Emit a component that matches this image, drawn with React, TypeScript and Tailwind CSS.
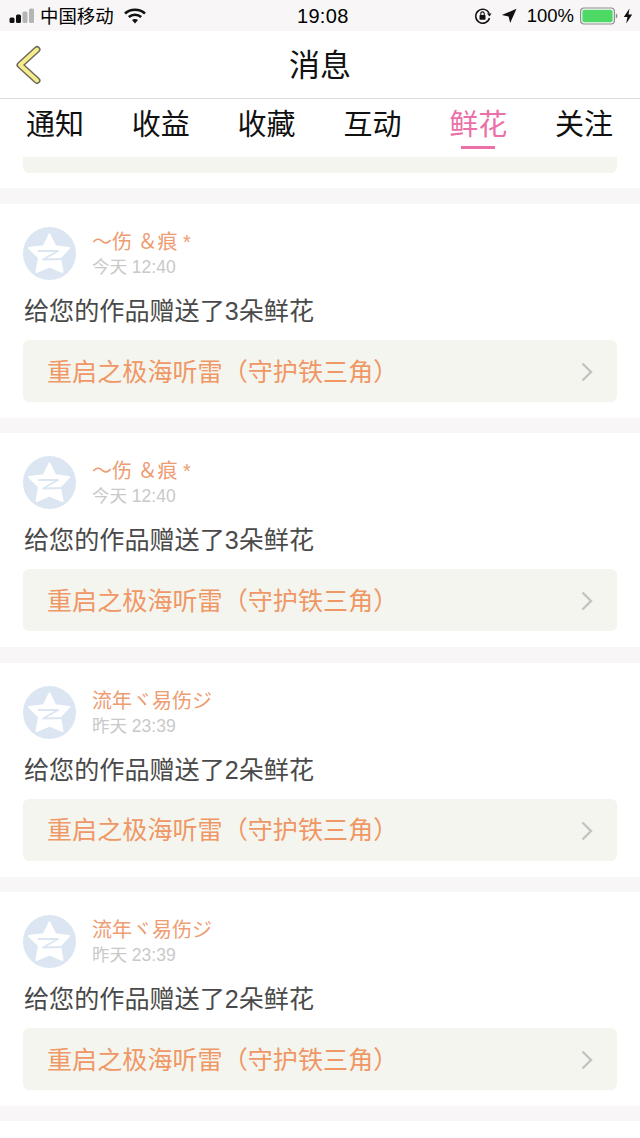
const FONT = "font-['Liberation_Sans','Noto_Sans_CJK_SC',sans-serif]";

function QAvatar() {
  return (
    <svg width="53" height="53" viewBox="0 0 53 53" className="shrink-0">
      <circle cx="26.5" cy="26.5" r="26.5" fill="#dbe6f2" />
      <path d="M26.5 7.5 L32.2 19.2 L46 21 L37 30.8 L39.5 45 L26.5 39.6 L13.5 45 L16 30.8 L6 21 L20.8 19.2 Z" fill="#ffffff" stroke="#ffffff" strokeWidth="2" strokeLinejoin="round" />
      <path d="M15 24 L35 24 L20 32.5 L41 32" fill="none" stroke="#dbe6f2" strokeWidth="1.8" strokeLinejoin="round" />
    </svg>
  );
}

function Chevron() {
  return (
    <svg width="14" height="22" viewBox="0 0 14 22" className="mt-[2px]">
      <path d="M2.5 2.5 L11 11 L2.5 19.5" fill="none" stroke="#c3c4c0" strokeWidth="2.4" />
    </svg>
  );
}

function Item({ name, time, count }: { name: string; time: string; count: number }) {
  return (
    <div className="h-[214px] shrink-0 bg-white px-[23px] pt-[23px]">
      <div className="flex h-[53px] items-start gap-[16px]">
        <QAvatar />
        <div className="flex flex-col pt-[2px]">
          <div className="h-[26px] text-[20px] leading-[27px] text-[#ee9c72]">{name}</div>
          <div className="h-[24px] text-[17.5px] leading-[24px] text-[#c9c9c9]">{time}</div>
        </div>
      </div>
      <div className="mt-[8px] h-[46px] pl-px text-[25.1px] leading-[47px] text-[#4a4a4a]">
        给您的作品赠送了{count}朵鲜花
      </div>
      <div className="mt-[6px] flex h-[62px] items-center justify-between rounded-[6px] bg-[#f4f5ee] pl-[24px] pr-[23px]">
        <span className="pt-[3px] text-[25.1px] text-[#f09766]">重启之极海听雷（守护铁三角）</span>
        <Chevron />
      </div>
    </div>
  );
}

function Gap() {
  return <div className="h-[15.33px] shrink-0 bg-[#f8f6f7]" />;
}

function StatusBar() {
  return (
    <div className="flex h-[31px] items-center bg-[#f8f6f7] pl-[9px] pr-[7px] text-black">
      <div className="flex w-[288px] items-center">
        <svg width="26" height="16" viewBox="0 0 26 16">
          <rect x="0.5" y="9.5" width="5" height="5.5" rx="1.5" fill="#111" />
          <rect x="7" y="6.5" width="5" height="8.5" rx="1.5" fill="#111" />
          <rect x="13.5" y="3.5" width="5" height="11.5" rx="1.5" fill="#b5b5b5" />
          <rect x="20" y="0.5" width="5" height="14.5" rx="1.5" fill="#b5b5b5" />
        </svg>
        <span className="ml-[5px] pt-[3px] text-[18.4px] leading-none">中国移动</span>
        <svg width="22" height="16" viewBox="0 0 22 16" className="ml-[10px]">
          <path d="M1 5.5 C6.5 0.5 15.5 0.5 21 5.5" fill="none" stroke="#111" strokeWidth="2.6" />
          <path d="M4.8 9 C8.3 5.9 13.7 5.9 17.2 9" fill="none" stroke="#111" strokeWidth="2.6" />
          <path d="M8 12 C9.8 10.6 12.2 10.6 14 12 L11 15.5 Z" fill="#111" />
        </svg>
      </div>
      <div className="text-[20px] font-medium tracking-[0.3px]">19:08</div>
      <div className="ml-auto flex items-center">
        <svg width="18" height="18" viewBox="0 0 18 18">
          <path d="M15.2 6.5 A7 7 0 1 0 15.5 11" fill="none" stroke="#111" strokeWidth="1.5" />
          <path d="M13 6.5 L17.5 6.5 L15.5 9.5 Z" fill="#111" />
          <rect x="5.5" y="8" width="6" height="4.8" rx="0.8" fill="#111" />
          <path d="M6.8 8 V6.6 a1.7 1.7 0 0 1 3.4 0 V8" fill="none" stroke="#111" strokeWidth="1.1" />
        </svg>
        <svg width="16" height="16" viewBox="0 0 16 16" className="ml-[9px]">
          <path d="M15.5 0.8 L9.2 15 L7.6 8.4 L0.8 7 Z" fill="#111" />
        </svg>
        <span className="ml-[10px] pt-[2px] text-[18.5px] leading-none">100%</span>
        <svg width="38" height="18" viewBox="0 0 38 18" className="ml-[6px]">
          <rect x="0.6" y="1" width="33.8" height="16" rx="3.5" fill="none" stroke="#8e8e8e" strokeWidth="1.2" />
          <rect x="2.4" y="2.8" width="30.2" height="12.4" rx="2" fill="#4cd964" />
          <path d="M35.8 6.5 C37 7 37.5 8 37.5 9 C37.5 10 37 11 35.8 11.5 Z" fill="#8e8e8e" />
        </svg>
        <svg width="10" height="16" viewBox="0 0 10 16" className="ml-[5px]">
          <path d="M6.5 0.5 L0.8 9 L4.4 9 L3.2 15.5 L9.2 6.6 L5.5 6.6 Z" fill="#111" />
        </svg>
      </div>
    </div>
  );
}

function NavBar() {
  return (
    <div className="relative flex h-[68px] items-center justify-center border-b border-[#dedede] bg-white">
      <svg width="28" height="40" viewBox="0 0 28 40" className="absolute left-[15px] top-[14px]">
        <path d="M22 4.5 L5 20 L22 35.5" fill="none" stroke="#6f6a5c" strokeWidth="7" strokeLinecap="round" strokeLinejoin="round" />
        <path d="M22 4.5 L5 20 L22 35.5" fill="none" stroke="#f6ee8c" strokeWidth="4" strokeLinecap="round" strokeLinejoin="round" />
      </svg>
      <span className="pt-[3px] text-[31px] text-[#111111]">消息</span>
    </div>
  );
}

const TABS = ["通知", "收益", "收藏", "互动", "鲜花", "关注"];

function Tabs() {
  return (
    <div className="flex h-[58px] justify-between bg-white pl-[26px] pr-[27px]">
      {TABS.map((t) => (
        <div key={t} className="flex w-[58px] flex-col items-center">
          <span className={`h-[47px] text-[29px] leading-[52px] ${t === "鲜花" ? "text-[#ec6fa8]" : "text-[#111111]"}`}>{t}</span>
          {t === "鲜花" && <div className="h-[3px] w-[34px] bg-[#ec6fa8]" />}
        </div>
      ))}
    </div>
  );
}

export default function App() {
  return (
    <div className={`flex h-[1138px] w-[640px] flex-col overflow-hidden bg-white ${FONT}`}>
      <StatusBar />
      <NavBar />
      <Tabs />
      <div className="h-[31px] shrink-0 bg-white px-[23px]">
        <div className="h-[16px] rounded-b-[6px] bg-[#f4f5ee]" />
      </div>
      <div className="h-[16px] shrink-0 bg-[#f8f6f7]" />
      <Item name="～伤 ＆痕 *" time="今天 12:40" count={3} />
      <Gap />
      <Item name="～伤 ＆痕 *" time="今天 12:40" count={3} />
      <Gap />
      <Item name="流年ヾ易伤ジ" time="昨天 23:39" count={2} />
      <Gap />
      <Item name="流年ヾ易伤ジ" time="昨天 23:39" count={2} />
      <Gap />
    </div>
  );
}
